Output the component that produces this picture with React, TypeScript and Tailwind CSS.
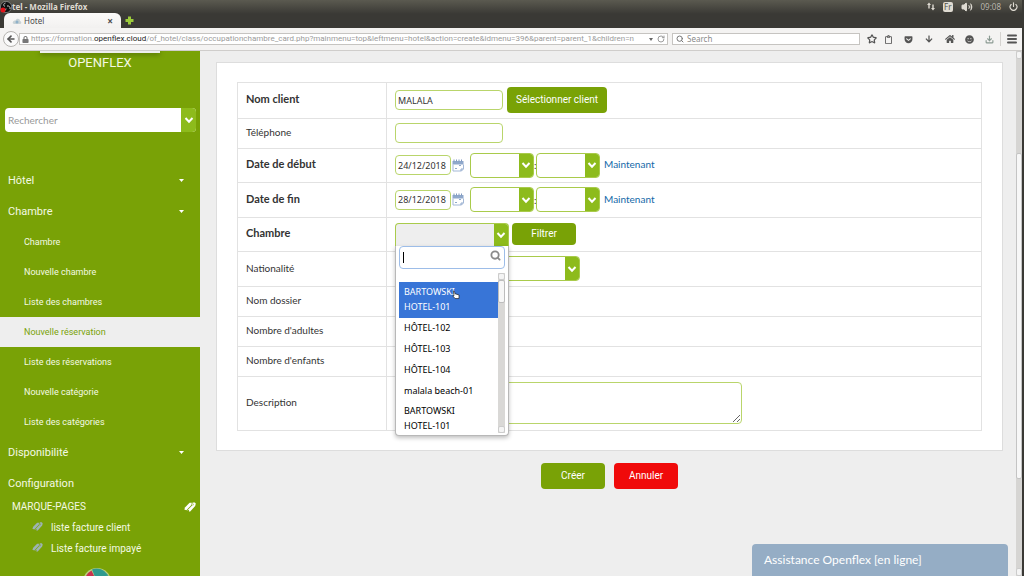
import type { ReactNode } from 'react';
import { ArrowLeft, Download, Menu, Power, RotateCw, Search, Star, Volume2 } from 'lucide-react';
import { FaArrowDown, FaGetPocket, FaHome, FaLock, FaRegClipboard, FaSmile } from 'react-icons/fa';

const roomItems = [
  'Chambre',
  'Nouvelle chambre',
  'Liste des chambres',
  'Nouvelle réservation',
  'Liste des réservations',
  'Nouvelle catégorie',
  'Liste des catégories',
];

const roomOptions = ['HÔTEL-102', 'HÔTEL-103', 'HÔTEL-104', 'malala beach-01'];

const bookmarks = ['liste facture client', 'Liste facture impayé'];

function Chevron() {
  return (
    <svg viewBox="0 0 10 8" className="w-[10px] h-2" fill="none" stroke="white" strokeWidth="2">
      <path d="M1.5 2 L5 5.7 L8.5 2" />
    </svg>
  );
}

function Tags({ className }: { className: string }) {
  return (
    <svg viewBox="0 0 12 10" className={className} fill="currentColor">
      <path d="M0.3 7.5 L1.2 5.2 L5.6 0.8 L7.8 0.8 L7.4 3 L2.4 8.2 Z" />
      <path d="M2.9 8.8 L8.1 3.4 L8.6 0.4 L10.8 0.4 L11.8 1.6 L11.2 4 L6.2 9.4 L4.9 9.6 L5.1 7.8 Z" />
      <path d="M8.9 1.5 L9.6 2.2 L8.7 3.7" stroke="#79a206" strokeWidth="0.5" fill="none" />
    </svg>
  );
}

function CalendarIcon() {
  return (
    <svg viewBox="0 0 12 13" className="w-3 h-[13px]" fill="none">
      <rect x="0.5" y="2" width="11" height="3.5" fill="#8fa8cb" />
      <path d="M2 0.5v2M4.5 0.5v2M7 0.5v2M9.5 0.5v2" stroke="#7e98bf" />
      <path d="M1 5.5V12h8.5l2-2V5.5" stroke="#a3b8d6" />
      <path d="M3 9.5h2M9 12v-2h2M7 6.5h2" stroke="#8fa8cb" />
    </svg>
  );
}

function TitleBar() {
  return (
    <header className="h-7 shrink-0 bg-linear-to-b from-[#5b5a50] to-[#3a3935] to-50% font-['Noto_Sans',sans-serif]">
      <div className="h-[13px] flex items-center justify-between pr-1 text-[#dfdbd2]">
        <div className="flex items-center">
          <svg viewBox="0 0 12 12" className="size-3">
            <circle cx="6" cy="6" r="5.6" fill="#111" stroke="#bbb" strokeWidth="0.5" />
            <path d="M5 5.5C3 4.5 3.5 2.5 5.5 2M7 5c2-.5 3.5 1 3 3M6 7.5c0 2-2 2.5-3 2" stroke="#ccc" fill="none" />
            <circle cx="3" cy="9" r="2.5" fill="#e2131b" />
          </svg>
          <span className="text-[8px] leading-3 font-bold">tel - Mozilla Firefox</span>
        </div>
        <div className="flex items-center gap-2">
          <svg viewBox="0 0 8 9" className="w-2 h-[9px]" fill="currentColor">
            <path d="M2 0.5 L4 3H2.7V6.5H1.3V3H0z" />
            <path d="M6 8.5 L8 6H6.7V2.5H5.3V6H4z" />
          </svg>
          <span className="bg-[#dfdbd2] text-[#55534a] text-[8px] leading-[10px] px-px rounded-xs">Fr</span>
          <Volume2 className="size-3" fill="currentColor" strokeWidth={2} />
          <span className="text-[8px] leading-3 text-[#b9b5ac]">09:08</span>
          <Power className="size-[9px]" strokeWidth={3} />
        </div>
      </div>
      <div className="h-[15px] flex items-end">
        <div className="ml-1 w-[117px] h-[15px] rounded-t-md bg-linear-to-b from-[#fbfaf9] to-[#f2f1f0] flex items-center px-2 text-[#4c4c4c]">
          <svg viewBox="0 0 10 8" className="w-[10px] h-2 mr-[2px]">
            <path d="M1 6.5C0 4.5 2 3 3.5 3.5C4.5 1 8 1.5 8 4C10 4.5 9.5 7 8 7H2z" fill="#c9d3d6" />
            <circle cx="5" cy="5" r="1.5" fill="#8fb1c9" />
          </svg>
          <span className="text-[8px] leading-3 flex-1">Hotel</span>
          <button aria-label="Fermer" className="text-[10px] leading-3 font-bold">×</button>
        </div>
        <button aria-label="Nouvel onglet" className="ml-1 mb-[3px]">
          <svg viewBox="0 0 9 9" className="size-[9px]">
            <path d="M3 0.5h3v2.5h2.5v3H6v2.5H3V6H0.5V3H3z" fill="#9ccb3b" />
          </svg>
        </button>
      </div>
    </header>
  );
}

function NavBar() {
  return (
    <div className="h-[23px] shrink-0 bg-[#f4f3f2] border-b border-[#cfcdcb] flex items-center font-['Noto_Sans',sans-serif] text-[#555555]">
      <button aria-label="Retour" className="ml-[3px] size-4 shrink-0 rounded-full border border-[#b5b3b0] bg-[#fafafa] flex items-center justify-center">
        <ArrowLeft className="size-[10px]" strokeWidth={4} />
      </button>
      <div className="flex-1 min-w-0 h-3 border border-[#c6c4c1] bg-white flex items-center px-[2px] gap-[2px] text-[#9b9b9b]">
        <FaLock className="size-[7px] shrink-0 text-[#777777]" />
        <span className="flex-1 min-w-0 whitespace-nowrap text-[8px] leading-[10px] font-[Roboto,sans-serif]">
          https://formation.<span className="text-[#222222]">openflex.cloud</span>
          /of_hotel/class/occupationchambre_card.php?mainmenu=top&amp;leftmenu=hotel&amp;action=create&amp;idmenu=396&amp;parent=parent_1&amp;children=n
        </span>
        <svg viewBox="0 0 4 3" className="w-1 h-[3px]"><path d="M0 0h4L2 3z" fill="#666" /></svg>
        <RotateCw className="ml-[2px] size-2 shrink-0" strokeWidth={3} />
      </div>
      <div className="ml-1 w-[188px] h-3 border border-[#c6c4c1] bg-white flex items-center gap-[3px] px-[3px]">
        <Search className="size-2 text-[#777777]" strokeWidth={3} />
        <input aria-label="Search" placeholder="Search" className="flex-1 min-w-0 text-[8px] leading-[10px] outline-none placeholder:text-[#8a8a8a]" />
      </div>
      <div className="flex items-center w-[162px] pl-[7px] shrink-0">
        <Star className="size-[10px]" strokeWidth={3} />
        <FaRegClipboard className="ml-[7px] size-[9px]" />
        <FaGetPocket className="ml-[11px] size-[9px]" />
        <FaArrowDown className="ml-3 size-2" />
        <FaHome className="ml-3 size-[10px]" />
        <FaSmile className="ml-[10px] size-[9px]" />
        <Download className="ml-[11px] size-[9px] text-[#8a9a92]" strokeWidth={3} />
        <span className="ml-[6px] w-px h-[14px] bg-[#d5d3d0]" />
        <Menu className="ml-[5px] size-3" strokeWidth={4} />
      </div>
    </div>
  );
}

function MenuHeading({ label, caret }: { label: string; caret?: boolean }) {
  return (
    <a href="#" className="h-[31px] flex items-center justify-between pl-2 pr-4 text-[11px] leading-4">
      {label}
      {caret && (
        <svg viewBox="0 0 5 3" className="w-[5px] h-[3px]"><path d="M0 0h5L2.5 3z" fill="white" /></svg>
      )}
    </a>
  );
}

function Sidebar() {
  return (
    <aside className="relative w-[200px] shrink-0 overflow-hidden bg-[#79a206] text-[#f4f9e4] font-[Roboto,sans-serif]">
      <div className="absolute left-10 top-0 w-[120px] h-[2px] bg-[#eeeeee] shadow-[0_1px_5px_rgba(0,0,0,0.5)]" />
      <h1 className="pt-1 text-[13px] leading-4 text-center">OPENFLEX</h1>
      <div className="mt-[37px] ml-[5px] mr-1 h-6 flex rounded-sm overflow-hidden bg-white">
        <input aria-label="Rechercher" placeholder="Rechercher" className="flex-1 min-w-0 px-[3px] text-[10px] text-gray-700 outline-none placeholder:text-[#999999] font-[Lato,sans-serif]" />
        <button aria-label="Ouvrir" className="w-[15px] bg-[#8dbb1c] flex items-center justify-center">
          <Chevron />
        </button>
      </div>
      <nav className="mt-[33px]">
        <MenuHeading label="Hôtel" caret />
        <MenuHeading label="Chambre" caret />
        {roomItems.map(item => (
          <a
            key={item}
            href="#"
            className={`h-[30px] flex items-center pl-6 text-[9px] leading-4 ${
              item === 'Nouvelle réservation' ? 'bg-[#eeeeee] text-[#79a206]' : ''
            }`}
          >
            {item}
          </a>
        ))}
        <MenuHeading label="Disponibilité" caret />
        <MenuHeading label="Configuration" />
      </nav>
      <div className="flex items-center justify-between pl-3 pr-1 text-[10px] leading-4">
        MARQUE-PAGES
        <Tags className="w-3 h-[10px] text-white" />
      </div>
      <ul className="mt-[2px] text-[10px]">
        {bookmarks.map(item => (
          <li key={item} className="h-[21px] flex items-center pl-8 gap-2">
            <Tags className="w-[11px] h-[9px] mb-[3px] text-[#9db3b4]" />
            <a href="#">{item}</a>
          </li>
        ))}
      </ul>
      <svg viewBox="0 0 28 28" className="ml-[83px] mt-[9px] size-7">
        <circle cx="14" cy="14" r="14" fill="#b9cf7f" />
        <path d="M14 14 L9 1.5 A13 13 0 0 1 25 7z" fill="#2f9a8f" />
        <path d="M14 14 L3 8 A13 13 0 0 1 8.5 2.5z" fill="#c8324f" />
        <path d="M14 14 L25 7 A13 13 0 0 1 3 20 V8z" fill="#2f9a8f" />
      </svg>
    </aside>
  );
}

const inputStyle = "h-5 rounded-sm border border-[#b9d56b] bg-white px-[2px] text-[9px] text-[#333333] outline-none font-['Noto_Sans',sans-serif]";
const buttonStyle = 'rounded-sm text-white text-[10px] leading-4 font-[Roboto,sans-serif]';

function SelectBox({ id, label, className }: { id?: string; label: string; className: string }) {
  return (
    <span className={`relative h-[25px] flex rounded-sm overflow-hidden border border-[#a9cb4b] bg-white ${className}`}>
      <select id={id} aria-label={label} className="flex-1 min-w-0 appearance-none outline-none">
        <option></option>
      </select>
      <span className="w-[14px] bg-[#8dbb1c] flex items-center justify-center pointer-events-none">
        <Chevron />
      </span>
    </span>
  );
}

function FormRow({ id, label, bold, height, children }: { id: string; label: string; bold?: boolean; height: string; children: ReactNode }) {
  return (
    <tr className={`${height} border border-[#e2e2e2]`}>
      <th scope="row" className={`w-[149px] border-r border-[#e2e2e2] pl-2 pb-[3px] text-left leading-4 ${bold ? 'text-[11px] font-bold' : 'text-[10px] font-normal'}`}>
        <label htmlFor={id}>{label}</label>
      </th>
      <td className="pl-2 pb-px">
        <div className="flex items-center">{children}</div>
      </td>
    </tr>
  );
}

function DateFields({ id, value }: { id: string; value: string }) {
  return (
    <>
      <input id={id} defaultValue={value} className={`${inputStyle} w-14`} />
      <button type="button" aria-label="Calendrier" className="ml-px mr-[6px]">
        <CalendarIcon />
      </button>
      <SelectBox label="Heure" className="w-16" />
      <span className="w-[2px] text-[10px] leading-4">:</span>
      <SelectBox label="Minute" className="w-16" />
      <a href="#" className="ml-1 pb-[2px] text-[10px] leading-4 text-[#1469a8]">Maintenant</a>
    </>
  );
}

function RoomDropdown() {
  return (
    <div className="absolute left-0 top-full z-10 w-[114px] h-[190px] rounded-b-sm border border-[#b8b8b8] border-t-0 bg-white shadow-[0_2px_4px_rgba(0,0,0,0.25)] px-[3px] text-[9px] text-black font-['Noto_Sans',sans-serif]">
      <div className="relative">
        <input aria-label="Rechercher une chambre" className="w-full h-[23px] block rounded-sm border border-[#9dbde8] bg-white pl-1 pr-4 outline-none" />
        <span className="absolute left-1 top-[6px] w-px h-[11px] bg-black" />
        <Search className="absolute right-1 top-1 size-[11px] text-[#8a8a8a]" strokeWidth={4} />
      </div>
      <div className="mt-1 flex h-[160px]">
        <ul role="listbox" aria-label="Chambres" className="flex-1 pt-[9px] leading-[15px]">
          <li role="option" aria-selected="true" className="relative bg-[#3875d7] text-white px-[5px] pt-[2px] h-9">
            BARTOWSKI<br />HOTEL-101
            <svg viewBox="0 0 9 11" className="absolute left-[53px] top-[8px] w-2 h-[10px]" fill="white" stroke="#222" strokeWidth="0.8">
              <path d="M1.5 1C2.5 0.5 3 1.5 3.3 4L8 5.5L7.8 9.5H3.5L0.8 6.5L2.3 6.2z" />
            </svg>
          </li>
          {roomOptions.map(option => (
            <li key={option} role="option" aria-selected="false" className="h-[21px] px-[5px] pt-[2px] whitespace-nowrap">{option}</li>
          ))}
          <li role="option" aria-selected="false" className="px-[5px] pt-px">
            BARTOWSKI<br />HOTEL-101
          </li>
        </ul>
        <div className="w-[7px] bg-[#d9d8d6] flex flex-col">
          <span className="h-[7px] rounded-xs border border-[#cccccc] bg-[#f4f4f4]" />
          <span className="h-[23px] rounded-xs border border-[#bdbdbd] bg-[#f7f7f7]" />
          <span className="mt-auto h-[7px] rounded-xs border border-[#cccccc] bg-[#f4f4f4]" />
        </div>
      </div>
    </div>
  );
}

function BookingForm() {
  return (
    <form className="ml-4 mr-[13px] mt-[11px]">
      <div className="bg-white border border-[#dddddd] px-5 py-[19px]">
        <table className="w-full border-collapse">
          <tbody>
            <FormRow id="client" label="Nom client" bold height="h-9">
              <input id="client" defaultValue="MALALA" className={`${inputStyle} w-[108px]`} />
              <button type="button" className={`${buttonStyle} ml-1 h-[26px] px-[9px] bg-[#79a206]`}>Sélectionner client</button>
            </FormRow>
            <FormRow id="phone" label="Téléphone" height="h-[30px]">
              <input id="phone" className={`${inputStyle} w-[108px]`} />
            </FormRow>
            <FormRow id="start" label="Date de début" bold height="h-[34px]">
              <DateFields id="start" value="24/12/2018" />
            </FormRow>
            <FormRow id="end" label="Date de fin" bold height="h-[35px]">
              <DateFields id="end" value="28/12/2018" />
            </FormRow>
            <FormRow id="room" label="Chambre" bold height="h-[34px]">
              <div className="relative">
                <button id="room" type="button" aria-haspopup="listbox" aria-expanded="true" className="w-[114px] h-[23px] flex justify-end rounded-t-sm overflow-hidden border border-b-0 border-[#a9cb4b] bg-[#eeeeee]">
                  <span className="w-[14px] h-full bg-[#8dbb1c] flex items-center justify-center">
                    <Chevron />
                  </span>
                </button>
                <RoomDropdown />
              </div>
              <button type="button" className={`${buttonStyle} ml-[3px] w-16 h-[22px] bg-[#79a206]`}>Filtrer</button>
            </FormRow>
            <FormRow id="country" label="Nationalité" height="h-[35px]">
              <SelectBox id="country" label="Nationalité" className="w-[185px]" />
            </FormRow>
            <FormRow id="folder" label="Nom dossier" height="h-[30px]">
              <input id="folder" className={`${inputStyle} w-[108px]`} />
            </FormRow>
            <FormRow id="adults" label="Nombre d'adultes" height="h-[30px]">
              <input id="adults" className={`${inputStyle} w-[108px]`} />
            </FormRow>
            <FormRow id="children" label="Nombre d'enfants" height="h-[30px]">
              <input id="children" className={`${inputStyle} w-[108px]`} />
            </FormRow>
            <FormRow id="description" label="Description" height="h-[54px]">
              <textarea id="description" className="w-[347px] h-[42px] rounded-sm border border-[#b9d56b] outline-none" />
            </FormRow>
          </tbody>
        </table>
      </div>
      <div className="mt-3 flex justify-center gap-[9px]">
        <button type="submit" className={`${buttonStyle} w-16 h-[26px] bg-[#79a206]`}>Créer</button>
        <button type="button" className={`${buttonStyle} w-16 h-[26px] bg-[#f00a0a]`}>Annuler</button>
      </div>
    </form>
  );
}

export default function App() {
  return (
    <div className="h-screen flex flex-col overflow-hidden bg-[#eeeeee] border-r-2 border-[#3a3935]">
      <TitleBar />
      <NavBar />
      <div className="flex-1 min-h-0 flex">
        <Sidebar />
        <main className="relative flex-1 min-w-0 text-[#333333] font-[Lato,sans-serif]">
          <BookingForm />
          <button className="absolute right-2 bottom-0 w-64 h-8 rounded-t-sm bg-[#95adc5] px-3 text-left text-white text-[12px] leading-4">
            Assistance Openflex [en ligne]
          </button>
        </main>
        <div className="w-[6px] flex flex-col bg-[#d6d5d3]">
          <span className="h-2 rounded-xs border border-[#cccccc] bg-[#f4f4f4]" />
          <span className="mt-[94px] h-[326px] rounded-xs border border-[#c4c4c4] bg-[#f7f7f7]" />
          <span className="mt-auto h-2 rounded-xs border border-[#cccccc] bg-[#f4f4f4]" />
        </div>
      </div>
    </div>
  );
}
